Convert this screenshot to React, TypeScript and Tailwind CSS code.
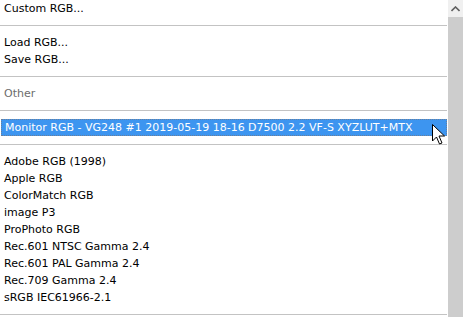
import React from "react";

const font = { fontFamily: '"DejaVu Sans", Verdana, sans-serif' };

function Row({ children, muted }: { children: React.ReactNode; muted?: boolean }) {
  return (
    <div className={`h-[17px] pl-[4px] leading-[17px] whitespace-nowrap ${muted ? "text-[#6d6d6d]" : "text-black"}`}>
      {children}
    </div>
  );
}

function Sep() {
  return <div className="my-[8px] h-px mr-px bg-[#c3c3c3]" />;
}

export default function App() {
  const profiles = [
    "Adobe RGB (1998)",
    "Apple RGB",
    "ColorMatch RGB",
    "image P3",
    "ProPhoto RGB",
    "Rec.601 NTSC Gamma 2.4",
    "Rec.601 PAL Gamma 2.4",
    "Rec.709 Gamma 2.4",
    "sRGB IEC61966-2.1",
  ];

  return (
    <div className="w-[464px] h-[317px] bg-white flex overflow-hidden text-[11px]" style={font}>
      {/* list */}
      <div className="flex-1 relative">
        <Row>Custom RGB...</Row>
        <Sep />
        <Row>Load RGB...</Row>
        <Row>Save RGB...</Row>
        <Sep />
        <Row muted>Other</Row>
        <Sep />
        <div className="h-[17px] ml-px mr-px bg-[#3d95f0] border border-dotted border-[#6b7f99] pl-[3px] leading-[15px] text-white whitespace-nowrap">
          Monitor RGB - VG248 #1 2019-05-19 18-16 D7500 2.2 VF-S XYZLUT+MTX
        </div>
        <Sep />
        {profiles.map((p) => (
          <Row key={p}>{p}</Row>
        ))}
        <Sep />

        {/* mouse pointer */}
        <svg className="absolute left-[432px] top-[124px]" width="14" height="22" viewBox="0 0 14 22">
          <path
            d="M0.5 0.5 L0.5 17 L4.5 13 L7.5 20 L10 19 L7 12 L12.5 12 Z"
            fill="#fff"
            stroke="#000"
            strokeWidth="1"
            strokeLinejoin="miter"
          />
        </svg>
      </div>

      {/* scrollbar */}
      <div className="w-[15px] flex flex-col bg-[#cdcdcd]">
        <div className="h-[17px] bg-[#f0f0f0] flex items-center justify-center">
          <svg width="9" height="6" viewBox="0 0 9 6">
            <path d="M0.5 5 L4.5 1 L8.5 5" fill="none" stroke="#606060" strokeWidth="1.6" />
          </svg>
        </div>
      </div>
      <div className="w-px bg-white" />
    </div>
  );
}
